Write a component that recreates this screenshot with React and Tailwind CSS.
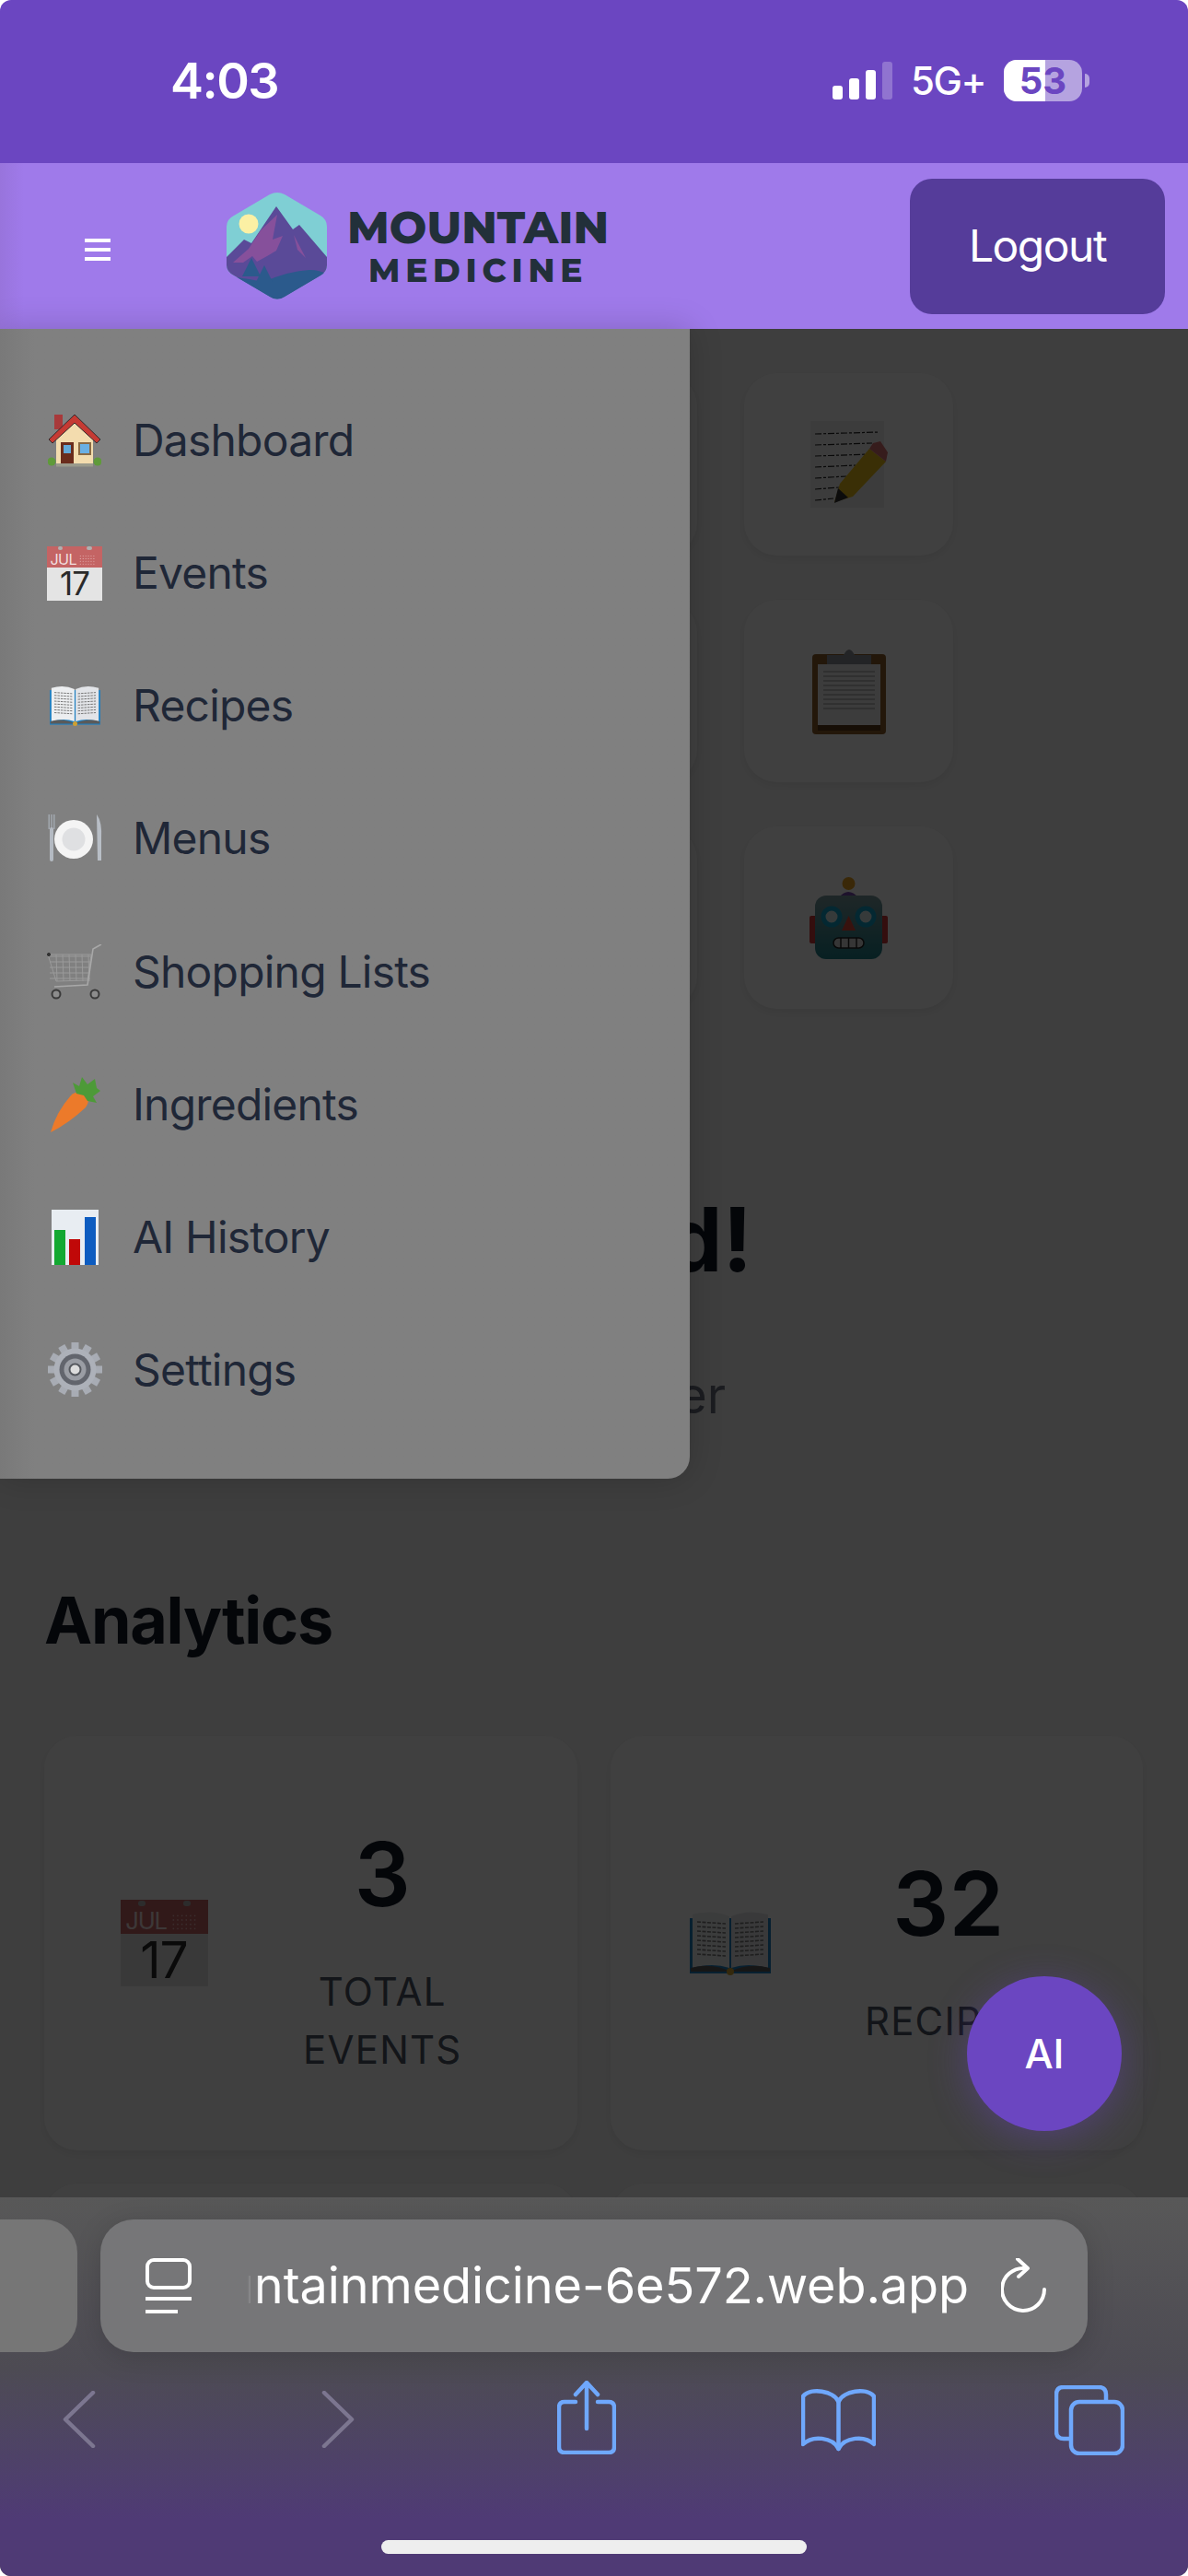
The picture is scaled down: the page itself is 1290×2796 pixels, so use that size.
import React from "react";

function Logo() {
  return (
    <svg width="109" height="118" viewBox="0 0 109 118" className="shrink-0">
      <defs>
        <clipPath id="hex">
          <path d="M47 3 Q55 -1 63 3 L102 26 Q109 30 109 38 L109 80 Q109 87 102 91 L63 114 Q55 119 47 114 L8 91 Q0 87 0 80 L0 38 Q0 30 8 26 Z" />
        </clipPath>
      </defs>
      <g clipPath="url(#hex)">
        <rect width="109" height="118" fill="#7fcfd4" />
        <circle cx="24" cy="35" r="10.5" fill="#fbf0a4" />
        <polygon points="0,71 19,52 27,56 54,16 72,41 79,36 109,71 109,118 0,118" fill="#5a4a98" />
        <polygon points="7,77 24,62 37,42 55,25 50,52 61,48 54,64 44,70 33,76 28,70 18,77" fill="#86509b" />
        <polygon points="73,47 86,72 77,63" fill="#86509b" />
        <path d="M0 92 Q22 94 40 98 Q68 86 90 85 Q102 85 109 90 L109 118 L0 118 Z" fill="#2b5a8c" />
        <polygon points="17,92 27,72 37,92" fill="#2b5a8c" />
        <polygon points="32,98 41,80 50,98" fill="#2b5a8c" />
      </g>
    </svg>
  );
}

function House() {
  return (
    <svg width="58" height="57" viewBox="0 0 58 57">
      <rect x="7" y="0" width="9" height="16" fill="#a8393a" />
      <polygon points="9,26 29,5 49,26 49,53 9,53" fill="#f3dcae" />
      <polygon points="1,27 29,0 57,27 53,31 29,9 5,31" fill="#c53a33" stroke="#332a2c" strokeWidth="1" />
      <rect x="14" y="30" width="14" height="23" fill="#6a2c1c" />
      <rect x="17" y="33" width="8" height="9" fill="#62a8d8" />
      <rect x="33" y="30" width="14" height="14" fill="#8a6a44" />
      <rect x="35" y="32" width="10" height="10" fill="#6ab0e4" />
      <circle cx="4" cy="51" r="4.5" fill="#5f9a3a" />
      <circle cx="54" cy="51" r="4.5" fill="#5f9a3a" />
      <rect x="9" y="53" width="40" height="3.5" fill="#9a9a8c" />
    </svg>
  );
}

function Calendar({ w, h, number }) {
  const dots = [];
  for (let r = 0; r < 4; r++) for (let c = 0; c < 6; c++) dots.push([c * 6 + 3, r * 6 + 3]);
  return (
    <div className="flex flex-col" style={{ width: w, height: h }}>
      <div className="relative flex h-[39%] items-end bg-[#c46464] pb-[1%] pl-[6%]">
        <span className="absolute left-[20%] top-[3%] h-[15%] w-[9%] rounded-full bg-[#b0b0b0]" />
        <span className="absolute right-[19%] top-[3%] h-[15%] w-[9%] rounded-full bg-[#b0b0b0]" />
        <span className="leading-none text-[#f1dede]" style={{ fontSize: w * 0.27, letterSpacing: -w * 0.012 }}>JUL</span>
        <svg viewBox="0 0 36 26" className="absolute bottom-[5%] right-[6%] h-[55%] w-[42%]">
          {dots.map(([x, y]) => <circle key={`${x}-${y}`} cx={x} cy={y} r="1.1" fill="#e6b6b6" />)}
        </svg>
      </div>
      <div className="flex flex-1 items-center justify-center bg-[#e4e4e4] leading-none tracking-[-1px] text-[#2a2a2a]" style={{ fontSize: w * 0.58 }}>
        {number}
      </div>
    </div>
  );
}

function Book({ w, h, blue = "#1f7fc0" }) {
  const lines = [12, 17, 22, 27, 32, 37, 42, 47];
  return (
    <svg width={w} height={h} viewBox="0 0 88 70">
      <rect x="0" y="8" width="88" height="60" fill={blue} />
      <path d="M3 4 Q25 -2 43 6 L43 62 Q25 56 3 62 Z" fill="#eceef0" />
      <path d="M85 4 Q63 -2 45 6 L45 62 Q63 56 85 62 Z" fill="#e2e4e8" />
      <path d="M1 62 Q25 56 44 66 Q63 56 87 62 L87 66 L1 66 Z" fill="#5a5a5a" />
      {lines.map((y) => (
        <g key={y}>
          <line x1="8" y1={y} x2="39" y2={y + 2} stroke="#777" strokeWidth="1.6" strokeDasharray="4 1.5" />
          <line x1="49" y1={y + 2} x2="80" y2={y} stroke="#777" strokeWidth="1.6" strokeDasharray="4 1.5" />
        </g>
      ))}
      <circle cx="44" cy="66" r="4" fill="#d0a030" />
    </svg>
  );
}

function Plate() {
  return (
    <svg width="60" height="52" viewBox="0 0 60 52">
      <rect x="1.5" y="0" width="1.4" height="16" fill="#a4aab2" />
      <rect x="4.3" y="0" width="1.4" height="16" fill="#a4aab2" />
      <rect x="7.1" y="0" width="1.4" height="16" fill="#a4aab2" />
      <rect x="3" y="14" width="4" height="37" rx="2" fill="#b4bac2" />
      <path d="M54 0 Q60 8 59 26 L59 50 L55 50 Z" fill="#b8bec6" />
      <circle cx="29" cy="27" r="21" fill="#f4f4f4" />
      <circle cx="29" cy="27" r="12.5" fill="#dfe0e2" />
    </svg>
  );
}

function Cart() {
  const vs = [10, 17, 24, 31, 38, 45];
  const hs = [13, 19, 25, 31, 37];
  return (
    <svg width="60" height="60" viewBox="0 0 60 60" fill="none" stroke="#9a9a9a" strokeWidth="1">
      <path d="M1 11 L48 11 L44 39 L10 40 Z" />
      {vs.map((x) => <line key={x} x1={x} y1="11" x2={x + 1} y2="40" />)}
      {hs.map((y) => <line key={y} x1="3" y1={y} x2="47" y2={y} />)}
      <path d="M59 0 L50 5 L44 44 L8 46" strokeWidth="1.6" stroke="#a8a8a8" />
      <circle cx="2" cy="11" r="1.6" fill="#333" stroke="#333" />
      <circle cx="10" cy="54" r="4.5" fill="#8c8c8c" stroke="#3a3a3a" strokeWidth="2" />
      <circle cx="52" cy="54" r="4.5" fill="#8c8c8c" stroke="#3a3a3a" strokeWidth="2" />
    </svg>
  );
}

function Carrot() {
  return (
    <svg width="56" height="60" viewBox="0 0 56 60">
      <path d="M39 19 Q46 25 40 33 Q22 50 2 60 Q8 38 24 20 Q32 13 39 19 Z" fill="#ec7a2a" />
      <path d="M30 18 L26 6 L33 10 L36 0 L42 8 L50 2 L52 12 L56 15 L48 21 L52 28 L42 26 L38 20 Z" fill="#4d9a38" />
    </svg>
  );
}

function Chart() {
  return (
    <svg width="51" height="60" viewBox="0 0 51 60">
      <rect width="51" height="60" fill="#e8edf2" />
      <rect x="3" y="22" width="12" height="38" fill="#13a832" />
      <rect x="19" y="32" width="12" height="28" fill="#c00808" />
      <rect x="36" y="8" width="12" height="52" fill="#0d5cc0" />
    </svg>
  );
}

function Gear() {
  const teeth = Array.from({ length: 12 }, (_, i) => i * 30);
  return (
    <svg width="59" height="59" viewBox="0 0 59 59">
      {teeth.map((a) => (
        <rect key={a} x="25.5" y="0" width="8" height="10" fill="#a8acb4" transform={`rotate(${a} 29.5 29.5)`} />
      ))}
      <circle cx="29.5" cy="29.5" r="23" fill="#adb1b9" />
      <circle cx="29.5" cy="29.5" r="17" fill="#62656d" />
      <circle cx="29.5" cy="29.5" r="12" fill="#9a9da4" />
      <circle cx="29.5" cy="29.5" r="6" fill="#dcdcdc" stroke="#55585e" strokeWidth="2" />
    </svg>
  );
}

function Memo() {
  const rows = [[5, 14, 70], [5, 26, 62], [5, 38, 58], [5, 50, 44], [5, 62, 34], [5, 74, 26], [5, 86, 20]];
  return (
    <svg width="84" height="94" viewBox="0 0 84 94">
      <rect x="0" y="0" width="80" height="94" fill="#f0f0f0" />
      {rows.map(([x, y, l]) => (
        <line key={y} x1={x} y1={y} x2={x + l} y2={y - 2} stroke="#222" strokeWidth="1.2" strokeDasharray="7 2 3 2" />
      ))}
      <polygon points="64,30 82,44 46,82 26,88 32,68" fill="#e8bd1a" />
      <polygon points="26,89 30,73 41,83" fill="#333" />
      <polygon points="64,30 82,44 84,34 76,22 68,24" fill="#d87070" />
    </svg>
  );
}

function Clipboard() {
  const ys = [26, 31, 36, 41, 46, 51, 56, 61, 66];
  return (
    <svg width="80" height="94" viewBox="0 0 80 94">
      <rect x="0" y="7" width="80" height="87" rx="4" fill="#8c5e28" />
      <rect x="6" y="18" width="68" height="70" fill="#f0f0f0" />
      {ys.map((y) => <line key={y} x1="12" y1={y} x2="68" y2={y} stroke="#b0b0b0" strokeWidth="1.5" />)}
      <rect x="6" y="84" width="68" height="6" fill="#5a3a18" />
      <path d="M16 8 L34 8 Q40 -4 46 8 L64 8 L64 18 L16 18 Z" fill="#8a8f96" />
    </svg>
  );
}

function Robot() {
  return (
    <svg width="85" height="89" viewBox="0 0 85 89">
      <defs>
        <linearGradient id="robotFace" x1="0" y1="0" x2="0" y2="1">
          <stop offset="0" stopColor="#7a9a9e" />
          <stop offset="1" stopColor="#1f7f88" />
        </linearGradient>
      </defs>
      <rect x="0" y="42" width="8" height="30" rx="2" fill="#d03838" />
      <rect x="77" y="42" width="8" height="30" rx="2" fill="#d03838" />
      <circle cx="42.5" cy="7" r="7" fill="#e8a020" />
      <path d="M32 22 Q42 10 53 22 Z" fill="#7a4ab0" />
      <rect x="6" y="20" width="73" height="69" rx="12" fill="url(#robotFace)" />
      <circle cx="24" cy="43" r="9" fill="#d8e8e8" stroke="#10a0c8" strokeWidth="5" />
      <circle cx="61" cy="43" r="9" fill="#d8e8e8" stroke="#10a0c8" strokeWidth="5" />
      <polygon points="42.5,42 50,58 35,58" fill="#e04a3a" />
      <rect x="26" y="66" width="33" height="11" rx="5.5" fill="#d8d8d8" stroke="#222" strokeWidth="1.5" />
      <path d="M34 66 V77 M42.5 66 V77 M51 66 V77" stroke="#222" strokeWidth="1.5" />
    </svg>
  );
}

const menu = [
  ["Dashboard", <House key="h" />],
  ["Events", <Calendar key="c" w={60} h={59} number="17" />],
  ["Recipes", <Book key="b" w={55} h={44} />],
  ["Menus", <Plate key="p" />],
  ["Shopping Lists", <Cart key="ca" />],
  ["Ingredients", <Carrot key="cr" />],
  ["AI History", <Chart key="ch" />],
  ["Settings", <Gear key="g" />],
];

function StatCard({ icon, value, label }) {
  return (
    <div className="flex h-[450px] items-center gap-[40px] rounded-[36px] bg-white px-[72px] shadow-[0_4px_12px_rgba(0,0,0,0.08)]">
      <div className="flex w-[116px] shrink-0 justify-center">{icon}</div>
      <div className="min-w-0 flex-1 text-center">
        <div className="text-[96px] font-semibold leading-[144px] text-[#111827]">{value}</div>
        <div className="mt-[24px] text-[42px] uppercase leading-[63px] tracking-[1.2px] text-[#4b5563]">{label}</div>
      </div>
    </div>
  );
}

export default function App() {
  return (
    <div className="relative flex h-[2796px] w-[1290px] flex-col overflow-hidden rounded-[12px] bg-[#f8f8f8] font-['Inter',sans-serif]">
      {/* iOS status bar */}
      <div className="relative z-30 flex h-[177px] shrink-0 items-center bg-[#6b46c1] pb-[2px] pl-[185px] pr-[107px] text-white">
        <span className="text-[54px] font-semibold leading-none tracking-[-1.5px]">4:03</span>
        <div className="ml-auto flex items-center">
          <div className="flex items-end gap-[7px]">
            <span className="h-[15px] w-[11px] rounded-[3px] bg-white" />
            <span className="h-[23px] w-[11px] rounded-[3px] bg-white" />
            <span className="h-[32px] w-[11px] rounded-[3px] bg-white" />
            <span className="h-[41px] w-[11px] rounded-[3px] bg-white/25" />
          </div>
          <span className="ml-[20px] text-[42px] font-medium leading-none tracking-[-1.5px]">5G+</span>
          <div className="relative ml-[20px] flex h-[45px] w-[85px] items-center justify-center overflow-hidden rounded-[14px] bg-white/50 text-[40px] font-bold text-[#6b46c1]">
            <span className="absolute inset-y-0 left-0 w-[45px] bg-white" />
            <span className="relative leading-none">53</span>
          </div>
          <span className="ml-[3px] h-[15px] w-[5px] rounded-r-full bg-white/50" />
        </div>
      </div>

      {/* App header */}
      <header className="relative z-10 flex h-[180px] shrink-0 items-center bg-gradient-to-r from-[#9874dc] to-[#9f7aea] to-[2%] pl-[92px] pr-[25px]">
        <button className="mt-[8px] flex w-[28px] flex-col gap-[6px]" aria-label="Menu">
          <span className="h-[4px] bg-white" />
          <span className="h-[4px] bg-white" />
          <span className="h-[4px] bg-white" />
        </button>
        <div className="ml-[126px] flex items-center gap-[22px]">
          <Logo />
          <div className="flex flex-col items-center font-['Montserrat','Inter',sans-serif] leading-none text-[#22303a]">
            <span className="text-[48px] font-extrabold leading-[48px] tracking-[0px]">MOUNTAIN</span>
            <span className="mt-[3px] text-[36px] font-extrabold leading-[38px] tracking-[5.75px]">MEDICINE</span>
          </div>
        </div>
        <button className="ml-auto flex h-[147px] w-[277px] items-center justify-center rounded-[24px] bg-[#553c9a] text-[48px] tracking-[-1.5px] text-white">
          Logout
        </button>
      </header>

      {/* Page */}
      <main className="relative min-h-0 flex-1">
        <div className="pt-[48px]">
          <div className="ml-[252px] grid w-[783px] grid-cols-[227px_227px_227px] gap-x-[51px] gap-y-[48px]">
            <div className="h-[198px] rounded-[36px] bg-white shadow-[0_4px_12px_rgba(0,0,0,0.08)]" />
            <div className="h-[198px] rounded-[36px] bg-white shadow-[0_4px_12px_rgba(0,0,0,0.08)]" />
            <div className="flex h-[198px] items-center justify-center rounded-[36px] bg-white shadow-[0_4px_12px_rgba(0,0,0,0.08)]"><Memo /></div>
            <div className="h-[198px] rounded-[36px] bg-white shadow-[0_4px_12px_rgba(0,0,0,0.08)]" />
            <div className="h-[198px] rounded-[36px] bg-white shadow-[0_4px_12px_rgba(0,0,0,0.08)]" />
            <div className="flex h-[198px] items-center justify-center rounded-[36px] bg-white shadow-[0_4px_12px_rgba(0,0,0,0.08)]"><Clipboard /></div>
            <div className="h-[198px] rounded-[36px] bg-white shadow-[0_4px_12px_rgba(0,0,0,0.08)]" />
            <div className="h-[198px] rounded-[36px] bg-white shadow-[0_4px_12px_rgba(0,0,0,0.08)]" />
            <div className="flex h-[198px] items-center justify-center rounded-[36px] bg-white shadow-[0_4px_12px_rgba(0,0,0,0.08)]"><Robot /></div>
          </div>

          <h1 className="mt-[192px] pr-[473px] text-right text-[96px] font-bold leading-[116px] text-[#111827]">Welcome, Fred!</h1>
          <p className="mt-[77px] pr-[502px] text-right text-[54px] leading-[70px] text-[#6b7280]">Your kitchen planner</p>

          <h2 className="ml-[48px] mt-[166px] text-[70px] font-bold leading-[86px] tracking-[-1.3px] text-[#111827]">Analytics</h2>

          <div className="mt-[82px] grid grid-cols-2 gap-x-[36px] gap-y-[36px] pl-[48px] pr-[49px]">
            <StatCard icon={<Calendar w={95} h={94} number="17" />} value="3" label={<>Total<br />Events</>} />
            <StatCard icon={<Book w={88} h={70} />} value="32" label="Recipes" />
            <StatCard icon={null} value="" label="" />
            <StatCard icon={null} value="" label="" />
          </div>
        </div>

        {/* Dim layer behind the open menu */}
        <div className="absolute inset-0 bg-black/75" />

        {/* Side menu */}
        <nav className="absolute left-0 top-0 z-20 flex h-[1248px] w-[749px] flex-col rounded-br-[24px] bg-gradient-to-r from-[#797979] to-[#808080] to-[5%] pb-[46px] pl-[51px] pt-[49px] shadow-[0_0_36px_rgba(0,0,0,0.18)]">
          {menu.map(([label, icon]) => (
            <div key={label} className="flex h-[144.3px] items-center gap-[33px]">
              <div className="flex w-[60px] shrink-0 justify-center">{icon}</div>
              <span className="text-[48px] leading-none tracking-[-0.8px] text-[#1f2737]">{label}</span>
            </div>
          ))}
        </nav>

        {/* AI button */}
        <button className="absolute left-[1050px] top-[1788px] z-20 flex h-[168px] w-[168px] items-center justify-center rounded-full bg-[#6b46c1] text-[44px] font-medium text-white shadow-[0_8px_40px_rgba(107,70,193,0.4)]">
          AI
        </button>
      </main>

      {/* Safari toolbar */}
      <div className="absolute inset-x-0 bottom-0 z-30 h-[411px] bg-gradient-to-b from-[#585858] via-[#4d4b53] via-[45%] to-[#4f3a75] to-[85%]">
        <div className="mt-[24px] flex h-[144px] gap-[25px]">
          <div className="h-full w-[84px] rounded-r-[36px] bg-[#767676]" />
          <div className="flex h-full w-[1072px] items-center rounded-[36px] bg-[#767678] pl-[49px] pr-[44px] shadow-[0_6px_30px_rgba(0,0,0,0.15)]">
            <svg width="50" height="60" viewBox="0 0 50 60" className="shrink-0" fill="none" stroke="white" strokeWidth="4">
              <rect x="2" y="2" width="46" height="30" rx="7" />
              <line x1="0" y1="44" x2="50" y2="44" />
              <line x1="0" y1="58" x2="35" y2="58" />
            </svg>
            <div className="ml-[61px] flex w-[783px] shrink-0 justify-end overflow-hidden [mask-image:linear-gradient(to_right,transparent,white_14px)]">
              <span className="whitespace-nowrap text-[54px] leading-[70px] tracking-[-0.1px] text-white">mountainmedicine-6e572.web.app</span>
            </div>
            <svg width="50" height="60" viewBox="0 0 50 60" className="ml-auto shrink-0" fill="none" stroke="white" strokeWidth="4" strokeLinecap="round" strokeLinejoin="round">
              <path d="M26 11 A23 23 0 1 0 47 34" />
              <path d="M18 1 L29 11 L19 20" />
            </svg>
          </div>
        </div>

        {/* Navigation icons */}
        <div className="relative mt-[31px] h-[80px]">
          <svg width="36" height="62" viewBox="0 0 36 62" className="absolute left-[68px] top-[11px]" fill="none" stroke="#7c7690" strokeWidth="4.5" strokeLinecap="round" strokeLinejoin="round">
            <path d="M33 2 L3 31 L33 60" />
          </svg>
          <svg width="36" height="62" viewBox="0 0 36 62" className="absolute left-[349px] top-[11px]" fill="none" stroke="#7c7690" strokeWidth="4.5" strokeLinecap="round" strokeLinejoin="round">
            <path d="M3 2 L33 31 L3 60" />
          </svg>
          <svg width="64" height="80" viewBox="0 0 64 80" className="absolute left-[605px] top-0" fill="none" stroke="#6fa8fc" strokeWidth="4.5" strokeLinecap="round" strokeLinejoin="round">
            <path d="M20 23 L8 23 Q2 23 2 29 L2 72 Q2 78 8 78 L56 78 Q62 78 62 72 L62 29 Q62 23 56 23 L44 23" />
            <path d="M32 52 L32 3 M20 15 L32 2 L44 15" />
          </svg>
          <svg width="81" height="68" viewBox="0 0 81 68" className="absolute left-[870px] top-[9px]" fill="none" stroke="#6fa8fc" strokeWidth="4.5" strokeLinecap="round" strokeLinejoin="round">
            <path d="M40.5 14 C36 2 10 -2 2 8 L2 60 C12 50 34 52 40.5 65 C47 52 69 50 79 60 L79 8 C71 -2 45 2 40.5 14 Z" />
            <path d="M40.5 14 L40.5 65" />
          </svg>
          <svg width="76" height="76" viewBox="0 0 76 76" className="absolute left-[1145px] top-[5px]" fill="none" stroke="#6fa8fc" strokeWidth="4.5" strokeLinejoin="round">
            <path d="M16 58 L10 58 Q2 58 2 50 L2 10 Q2 2 10 2 L48 2 Q56 2 56 10 L56 18" />
            <rect x="18" y="18" width="56" height="56" rx="9" />
          </svg>
        </div>

        {/* Home indicator */}
        <div className="mx-auto mt-[93px] h-[15px] w-[462px] rounded-full bg-[#eeeeee]" />
      </div>
    </div>
  );
}
